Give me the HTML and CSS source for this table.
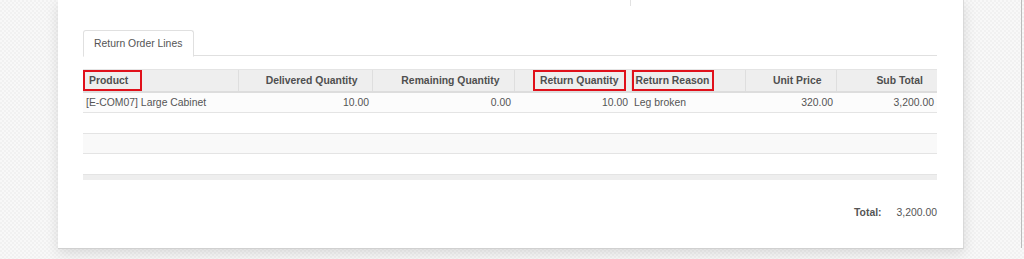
FILE: index.html
```html
<!DOCTYPE html>
<html lang="en">
<head>
    <meta charset="UTF-8">
    <title>Return Order</title>
    <link rel="stylesheet" href="styles.css">
</head>
<body>
<div class="page">
  <div class="sheet">
    <div class="group-top">
      <div class="group-col"></div>
      <div class="group-col split"></div>
    </div>

    <ul class="tabs">
      <li class="tab active">Return Order Lines</li>
    </ul>

    <table class="lines">
      <colgroup>
        <col style="width:155px">
        <col style="width:134px">
        <col style="width:142px">
        <col style="width:117px">
        <col style="width:114px">
        <col style="width:91px">
        <col style="width:101px">
      </colgroup>
      <thead>
        <tr>
          <th class="left mark-left"><span class="mark mark-product">Product</span></th>
          <th>Delivered Quantity</th>
          <th>Remaining Quantity</th>
          <th class="mark-right"><span class="mark mark-qty">Return Quantity</span></th>
          <th class="left mark-left"><span class="mark mark-reason">Return Reason</span></th>
          <th>Unit Price</th>
          <th>Sub Total</th>
        </tr>
      </thead>
      <tbody>
        <tr>
          <td class="left">[E-COM07] Large Cabinet</td>
          <td>10.00</td>
          <td>0.00</td>
          <td>10.00</td>
          <td class="left">Leg broken</td>
          <td>320.00</td>
          <td>3,200.00</td>
        </tr>
        <tr class="empty"><td colspan="7"></td></tr>
        <tr class="empty odd"><td colspan="7"></td></tr>
        <tr class="empty"><td colspan="7"></td></tr>
      </tbody>
      <tfoot>
        <tr><td colspan="7"></td></tr>
      </tfoot>
    </table>

    <div class="totals">
      <span class="total-label">Total:</span>
      <span class="total-value">3,200.00</span>
    </div>
  </div>
  <div class="scroll-edge"></div>
</div>
</body>
</html>
```

FILE: styles.css
```css
html, body {
  margin: 0;
  height: 100%;
}

body {
  font-family: "Liberation Sans", Arial, sans-serif;
  font-size: 10.4px;
  color: #555;
  background-color: #f4f4f4;
  background-image: repeating-conic-gradient(#f1f1f1 0 25%, #f8f8f8 0 50%);
  background-size: 4px 4px;
  overflow: hidden;
}

.page {
  display: flex;
  height: 259px;
}

.sheet {
  margin-left: 58px;
  width: 854px;
  height: 248px;
  padding: 0 26px 0 25px;
  background: #fff;
  border-right: 1px solid #d9d9d9;
  border-bottom: 1px solid #d0d0d0;
  box-shadow: 0 4px 12px rgba(0, 0, 0, 0.12);
  box-sizing: content-box;
}

.scroll-edge {
  margin-left: auto;
  margin-right: 2px;
  width: 1px;
  height: 248px;
  background: #bbb;
}

/* bottom of the field group above the notebook */
.group-top {
  display: flex;
  height: 6px;
}

.group-col {
  flex: none;
  width: 547px;
}

.group-col.split {
  flex: 1;
  width: auto;
  border-left: 1px solid #e2e2e2;
}

.tabs {
  list-style: none;
  margin: 24px 0 0;
  padding: 0;
  display: flex;
  border-bottom: 1px solid #e0e0e0;
  height: 25px;
}

.tab {
  padding: 0 11px 0 10px;
  line-height: 26px;
  height: 25px;
  border: 1px solid #e0e0e0;
  border-bottom-color: #fff;
  border-radius: 3px 3px 0 0;
  background: #fff;
  margin-bottom: -1px;
  white-space: nowrap;
  color: #555;
}

.lines {
  margin-top: 13px;
  width: 854px;
  border-collapse: collapse;
  table-layout: fixed;
}

.lines th,
.lines td {
  text-align: right;
  padding: 0 3px;
  white-space: nowrap;
  overflow: hidden;
}

.lines th.left,
.lines td.left {
  text-align: left;
}

.lines thead th {
  height: 19px;
  background: #eee;
  border-top: 1px solid #e4e4e4;
  border-bottom: 2px solid #ddd;
  border-left: 1px solid #dedede;
  font-weight: bold;
  color: #4f4f4f;
  padding-right: 14px;
}

.lines thead th:first-child {
  border-left: 0;
}

.lines thead th.mark-left {
  padding-left: 0;
}

.lines thead th.mark-right {
  padding-right: 5px;
}

.mark {
  display: inline-block;
  vertical-align: middle;
  border: 2px solid #e0101a;
  line-height: 17px;
}

.mark-product {
  padding: 0 12px 0 4px;
}

.mark-qty {
  padding: 0 5px;
}

.mark-reason {
  padding: 0 3px 0 2px;
}

.lines tbody td {
  height: 20px;
  border-bottom: 1px solid #e4e4e4;
  background: #fff;
}

.lines tbody tr:first-child td {
  height: 19px;
  background: #fcfcfc;
}

.lines tbody tr.odd td {
  height: 19px;
  background: #f9f9f9;
}

.lines tfoot td {
  height: 5px;
  padding: 0;
  background: #eee;
  border-top: 1px solid #e4e4e4;
}

.totals {
  display: flex;
  justify-content: flex-end;
  margin-top: 27px;
}

.total-label {
  font-weight: bold;
  margin-right: 15px;
}
```
